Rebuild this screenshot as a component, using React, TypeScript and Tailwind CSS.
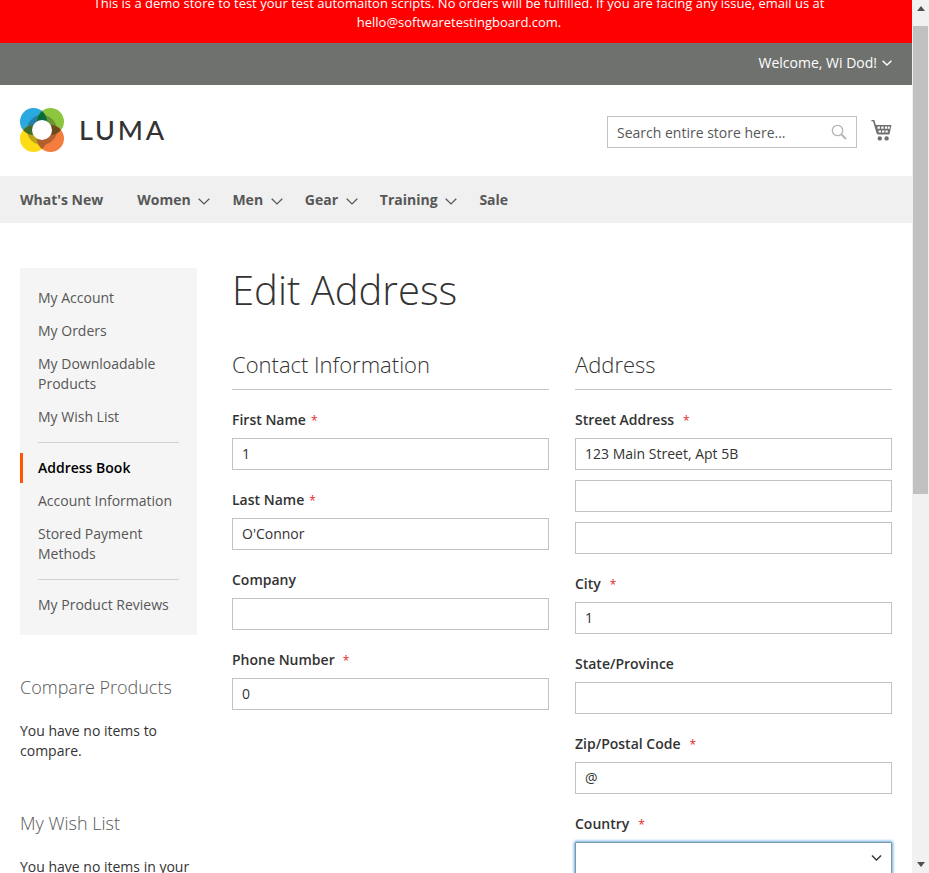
import React from "react";

const Chevron = ({ className = "", color = "currentColor", w = 1.3 }: { className?: string; color?: string; w?: number }) => (
  <svg viewBox="0 0 12 7" className={className} fill="none" stroke={color} strokeWidth={w}>
    <path d="M0.7 0.7 L6 5.9 L11.3 0.7" />
  </svg>
);

const Logo = () => (
  <svg width="44" height="44" viewBox="0 0 44 44" className="block">
    <circle cx="13.5" cy="13.5" r="13.5" fill="#29a9e0" />
    <circle cx="30.5" cy="13.5" r="13.5" fill="#8cc63f" />
    <circle cx="13.5" cy="30.5" r="13.5" fill="#fddc15" />
    <circle cx="30.5" cy="30.5" r="13.5" fill="#f47c3c" />
    <circle cx="22" cy="22" r="15" fill="#222" fillOpacity="0.3" />
    <path d="M22 3 A13.5 13.5 0 0 1 22 24 A13.5 13.5 0 0 1 22 3Z" fill="#0a6b3a" />
    <path d="M3 22 A13.5 13.5 0 0 1 24 22 A13.5 13.5 0 0 1 3 22Z" fill="#3f6b2e" />
    <path d="M20 22 A13.5 13.5 0 0 1 41 22 A13.5 13.5 0 0 1 20 22Z" fill="#6b4a1e" />
    <path d="M22 20 A13.5 13.5 0 0 1 22 41 A13.5 13.5 0 0 1 22 20Z" fill="#b0602c" />
    <circle cx="22" cy="22" r="10" fill="#fff" />
  </svg>
);

const Star = ({ gap }: { gap: string }) => <span className={`${gap} text-[#e02b27] font-normal text-[12px]`}>*</span>;

const Box = ({ value = "" }: { value?: string }) => (
  <div className="h-[32px] border border-[#c2c2c2] bg-white px-[9px] leading-[30px] text-[14px] text-[#333]">{value}</div>
);

const Field = ({ label, value = "", gap = "" }: { label: string; value?: string; gap?: string }) => (
  <div className="mb-[20px]">
    <div className="h-[20px] leading-[20px] font-semibold text-[14px] text-[#333] mb-[8px]">
      {label}
      {gap && <Star gap={gap} />}
    </div>
    <Box value={value} />
  </div>
);

const NavItem = ({ label, active = false }: { label: string; active?: boolean }) => (
  <div className={`relative py-[6.5px] px-[18px] leading-[20px] ${active ? "font-semibold text-black" : "text-[#575757]"}`}>
    {active && <span className="absolute left-0 top-[1.5px] bottom-[1.5px] w-[3px] bg-[#ff5501]" />}
    {label}
  </div>
);

const Menu = ({ label, chevron = true, cls }: { label: string; chevron?: boolean; cls: string }) => (
  <div className={`flex items-center ${cls}`}>
    <span>{label}</span>
    {chevron && <Chevron className="w-[12px] h-[7px] ml-[7.5px] mt-[3px]" color="#575757" />}
  </div>
);

export default function App() {
  return (
    <div className="flex h-[873px] w-[929px] overflow-hidden bg-white text-[14px] text-[#333] font-['Open_Sans',sans-serif]">
      <div className="w-[912px] shrink-0 overflow-hidden">
        <div className="h-[43px] overflow-hidden bg-[#ff0000] flex flex-col justify-end items-center pb-[11px] pl-[6px] text-white text-[13px] leading-[19px] text-center">
          <div className="shrink-0 whitespace-nowrap">This is a demo store to test your test automaiton scripts. No orders will be fulfilled. If you are facing any issue, email us at</div>
          <div className="shrink-0 whitespace-nowrap">hello@softwaretestingboard.com.</div>
        </div>
        <div className="h-[42px] bg-[#6e716e] flex items-center justify-end pr-[20px] pb-[3px] text-white text-[14px]">
          <span>Welcome, Wi Dod!</span>
          <Chevron className="w-[10px] h-[6px] ml-[5px] mt-[1px]" color="#fff" w={1.7} />
        </div>
        <div className="h-[91px] flex items-center justify-between pl-[20px] pr-[20px] pt-[3px]">
          <div className="flex items-center mb-[4px]">
            <Logo />
            <span className="ml-[15px] mb-[2px] font-['Lato',sans-serif] text-[27px] leading-none tracking-[2.8px] font-medium text-[#333]">LUMA</span>
          </div>
          <div className="flex items-center">
            <div className="w-[250px] h-[32px] border border-[#c2c2c2] flex items-center justify-between pl-[9px] pr-[9px]">
              <span className="text-[#575757]">Search entire store here...</span>
              <svg width="16" height="16" viewBox="0 0 16 16" fill="none" stroke="#b5b5b5" strokeWidth="1.3">
                <circle cx="6.5" cy="6.5" r="5.2" />
                <path d="M10.5 10.5 L15 15" strokeWidth="1.8" />
              </svg>
            </div>
            <svg width="21" height="21" viewBox="0 0 21 21" className="ml-[14px] mb-[3px]">
              <path d="M0.5 0.8 L2.6 0.2 L6.5 13.5" stroke="#6f6f6f" strokeWidth="1.6" fill="none" />
              <path d="M3.8 5 H20.5 L18.4 14.6 H6.6Z" fill="#6f6f6f" />
              <path d="M6.5 6.6 h2.4 v2.2 h-2.4z M10.2 6.6 h2.4 v2.2 h-2.4z M13.9 6.6 h2.4 v2.2 h-2.4z M17 6.6 h1.8 v2.2 h-1.8z M7.6 10.4 h2.4 v2.2 h-2.4z M11 10.4 h2.4 v2.2 h-2.4z M14.4 10.4 h2.4 v2.2 h-2.4z" fill="#fff" />
              <circle cx="8.8" cy="18.4" r="2.2" fill="#6f6f6f" />
              <circle cx="15.6" cy="18.4" r="2.2" fill="#6f6f6f" />
            </svg>
          </div>
        </div>
        <div className="h-[47px] bg-[#f0f0f0] flex items-center pl-[20px] font-bold text-[14px] text-[#575757]">
          <Menu label="What's New" chevron={false} cls="mr-[34px]" />
          <Menu label="Women" cls="mr-[22.25px]" />
          <Menu label="Men" cls="mr-[22.25px]" />
          <Menu label="Gear" cls="mr-[22.25px]" />
          <Menu label="Training" cls="mr-[22.25px]" />
          <Menu label="Sale" chevron={false} cls="" />
        </div>

        <div className="flex pl-[20px] pr-[20px] pt-[45px]">
          <div className="w-[177px] shrink-0 mr-[35px]">
            <div className="bg-[#f5f5f5] py-[13.5px]">
              <NavItem label="My Account" />
              <NavItem label="My Orders" />
              <NavItem label="My Downloadable Products" />
              <NavItem label="My Wish List" />
              <div className="mx-[18px] my-[8.5px] h-px bg-[#d1d1d1]" />
              <NavItem label="Address Book" active />
              <NavItem label="Account Information" />
              <NavItem label="Stored Payment Methods" />
              <div className="mx-[18px] my-[8.5px] h-px bg-[#d1d1d1]" />
              <NavItem label="My Product Reviews" />
            </div>
            <div className="mt-[40px] text-[18px] leading-[25px] font-light text-[#575757]">Compare Products</div>
            <div className="mt-[21px] leading-[20px] text-[#333]">You have no items to compare.</div>
            <div className="mt-[50px] text-[18px] leading-[25px] font-light text-[#575757]">My Wish List</div>
            <div className="mt-[21px] leading-[20px] text-[#333]">You have no items in your wish list.</div>
          </div>
          <div className="flex-1 min-w-0">
            <h1 className="text-[40px] leading-[44px] font-light text-[#333] mb-[38px]">Edit Address</h1>
            <div className="grid grid-cols-2 gap-x-[26px]">
              <div>
                <div className="text-[22px] leading-[28px] font-light text-[#333] pb-[11px] border-b border-[#c6c6c6] mb-[20px]">Contact Information</div>
                <Field label="First Name" value="1" gap="ml-[5px]" />
                <Field label="Last Name" value="O'Connor" gap="ml-[5px]" />
                <Field label="Company" />
                <Field label="Phone Number" value="0" gap="ml-[8px]" />
              </div>
              <div>
                <div className="text-[22px] leading-[28px] font-light text-[#333] pb-[11px] border-b border-[#c6c6c6] mb-[20px]">Address</div>
                <div className="mb-[20px]">
                  <div className="h-[20px] leading-[20px] font-semibold text-[14px] mb-[8px]">
                    Street Address<Star gap="ml-[9px]" />
                  </div>
                  <div className="flex flex-col gap-[10px]">
                    <Box value="123 Main Street, Apt 5B" />
                    <Box />
                    <Box />
                  </div>
                </div>
                <Field label="City" value="1" gap="ml-[9px]" />
                <Field label="State/Province" />
                <Field label="Zip/Postal Code" value="@" gap="ml-[9px]" />
                <div>
                  <div className="h-[20px] leading-[20px] font-semibold text-[14px] mb-[8px]">
                    Country<Star gap="ml-[9px]" />
                  </div>
                  <div className="h-[32px] border border-[#7a9aa8] rounded-[1px] shadow-[0_0_3px_1px_#68a8e0] bg-white flex items-center justify-end pr-[9px]">
                    <Chevron className="w-[11px] h-[6px]" color="#333" w={1.6} />
                  </div>
                </div>
              </div>
            </div>
          </div>
        </div>
      </div>

      <div className="w-[17px] shrink-0 bg-[#f1f1f1] flex flex-col items-center justify-between">
        <div className="w-full flex flex-col items-center">
          <div className="h-[17px] flex items-center justify-center">
            <svg width="8" height="5" viewBox="0 0 8 5" fill="#505050"><path d="M4 0 L8 5 H0Z" /></svg>
          </div>
          <div className="w-[15px] h-[468px] mt-[9px] bg-[#c1c1c1]" />
        </div>
        <div className="h-[17px] flex items-center justify-center">
          <svg width="8" height="5" viewBox="0 0 8 5" fill="#505050"><path d="M4 5 L8 0 H0Z" /></svg>
        </div>
      </div>
    </div>
  );
}
